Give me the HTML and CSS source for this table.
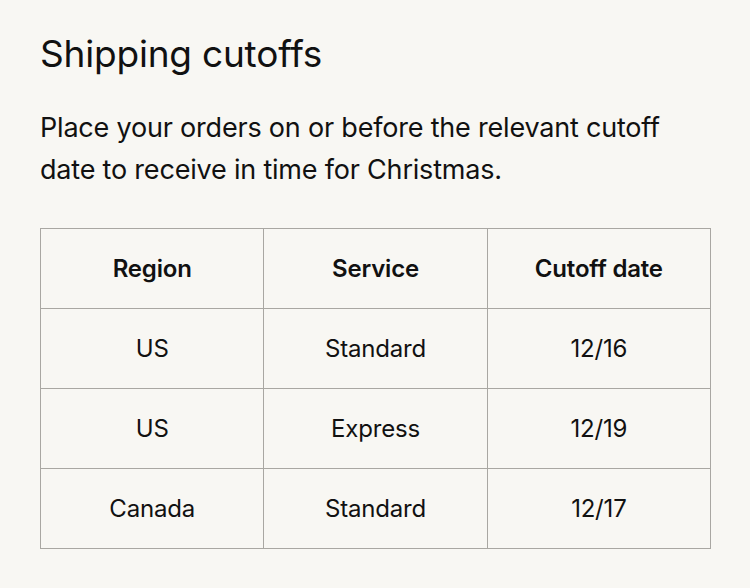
FILE: index.html
```html
<!DOCTYPE html>
<html lang="en">
<head>
<meta charset="utf-8">
<link rel="stylesheet" href="styles.css">
</head>
<body>
<main class="page">
  <h1 class="title">Shipping cutoffs</h1>
  <p class="intro">Place your orders on or before the relevant cutoff date to receive in time for Christmas.</p>
  <table class="cutoffs">
    <thead>
      <tr><th>Region</th><th>Service</th><th>Cutoff date</th></tr>
    </thead>
    <tbody>
      <tr><td>US</td><td>Standard</td><td>12/16</td></tr>
      <tr><td>US</td><td>Express</td><td>12/19</td></tr>
      <tr><td>Canada</td><td>Standard</td><td>12/17</td></tr>
    </tbody>
  </table>
</main>
</body>
</html>
```
FILE: styles.css
```css
html, body {
  margin: 0;
  padding: 0;
  background: #f8f7f3;
}
body {
  font-family: Inter, "Liberation Sans", sans-serif;
  color: #111;
}
.page {
  padding: 28px 40px 40px;
}
.title {
  margin: 0;
  font-size: 37px;
  font-weight: 400;
  line-height: 52px;
  letter-spacing: -0.2px;
}
.intro {
  margin: 27px 0 0;
  font-size: 27px;
  line-height: 42px;
  letter-spacing: -0.2px;
  width: 660px;
}
.cutoffs {
  margin-top: 37px;
  width: 671px;
  border-collapse: collapse;
  table-layout: fixed;
  border: 1px solid #a9a7a2;
}
.cutoffs th, .cutoffs td {
  border: 1px solid #a9a7a2;
  height: 79px;
  padding: 0;
  text-align: center;
  font-size: 24px;
  letter-spacing: -0.2px;
}
.cutoffs th {
  font-weight: 600;
}
.cutoffs td {
  font-weight: 400;
}
```
